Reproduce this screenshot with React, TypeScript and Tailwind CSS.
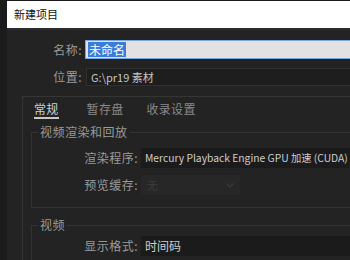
import React from 'react';

const font = { fontFamily: '"Noto Sans CJK SC", "Noto Sans", sans-serif' };

const Row: React.FC<{ label: string; children: React.ReactNode; className?: string }> = ({ label, children, className }) => (
  <div className={`flex items-center h-[20px] ${className ?? ''}`}>
    <div className="w-[108px] shrink-0 text-right pr-[2px] text-[12px] leading-[16px] tracking-[0.5px] text-[#9a9a9a]">{label}:</div>
    {children}
  </div>
);

const App: React.FC = () => {
  return (
    <div className="w-[350px] h-[260px] flex bg-[#1b1b1b] overflow-hidden select-none" style={font}>
      {/* window shadow on the left */}
      <div className="w-[7px] shrink-0 bg-[#1b1b1b]" />

      <div className="flex-1 flex flex-col min-w-0">
        {/* Title bar */}
        <div className="mt-[1px] h-[27px] shrink-0 bg-white flex items-center pl-[7px] text-[11px] text-[#111]">
          新建项目
        </div>
        <div className="h-[2px] shrink-0 bg-[#2c2c2c]" />

        <div className="flex-1 bg-[#232323] flex flex-col min-w-0">
          {/* Name */}
          <div className="mt-[10px] flex items-center h-[19px]">
            <div className="w-[75px] shrink-0 text-right text-[12px] tracking-[0.5px] text-[#9a9a9a]">名称:</div>
            <div className="ml-[3px] flex-1 h-[19px] -mr-[10px] bg-[#e2e2e2] border border-[#7aa6e0] flex items-center pl-[2px]">
              <span className="bg-[#3b7bd9] text-white text-[12px] leading-[15px] px-[1px]">未命名</span>
            </div>
          </div>

          {/* Location */}
          <div className="mt-[9px] flex items-center h-[18px]">
            <div className="w-[75px] shrink-0 text-right text-[12px] tracking-[0.5px] text-[#9a9a9a]">位置:</div>
            <div className="ml-[4px] flex-1 -mr-[10px] h-[18px] bg-[#1e1e1e] border border-[#303030] flex items-center pl-[4px] text-[11px] text-[#c4c4c4]">
              G:\pr19 素材
            </div>
          </div>

          {/* Tab panel */}
          <div className="mt-[10px] ml-[15px] -mr-[10px] flex-1 border border-[#353535] flex flex-col pt-[4px]">
            <div className="flex pl-[11px] text-[12px] leading-[16px] tracking-[0.3px]">
              <div className="text-[#cfcfcf] border-b-2 border-[#c8c8c8]">常规</div>
              <div className="ml-[28px] text-[#8a8a8a]">暂存盘</div>
              <div className="ml-[23px] text-[#8a8a8a]">收录设置</div>
            </div>

            <fieldset className="mt-[5px] ml-[8px] border border-[#333333] pb-[12px]">
              <legend className="ml-[6px] px-[2px] text-[12px] leading-[16px] tracking-[0.5px] text-[#9a9a9a]">视频渲染和回放</legend>
              <Row label="渲染程序" className="mt-[8px]">
                <div className="flex-1 h-[20px] ml-[1px] bg-[#1b1b1b] flex items-center pl-[4px] text-[10.3px] text-[#cdcdcd] whitespace-nowrap overflow-hidden">
                  Mercury Playback Engine GPU 加速 (CUDA)
                </div>
              </Row>
              <Row label="预览缓存" className="mt-[7px]">
                <div className="w-[99px] h-[20px] ml-[1px] bg-[#272727] flex items-center justify-between pl-[6px] pr-[6px] text-[11px] text-[#3e3e3e]">
                  <span>无</span>
                  <svg width="8" height="5" viewBox="0 0 8 5">
                    <path d="M0.5 0.5 L4 4 L7.5 0.5" stroke="#3c3c3c" strokeWidth="1.2" fill="none" />
                  </svg>
                </div>
              </Row>
            </fieldset>

            <fieldset className="mt-[9px] ml-[8px] border border-[#333333] pb-[12px]">
              <legend className="ml-[6px] px-[2px] text-[12px] leading-[16px] tracking-[0.5px] text-[#9a9a9a]">视频</legend>
              <Row label="显示格式" className="mt-[3px]">
                <div className="flex-1 h-[20px] ml-[1px] bg-[#1b1b1b] flex items-center pl-[4px] text-[12px] text-[#cdcdcd]">
                  时间码
                </div>
              </Row>
            </fieldset>
          </div>
        </div>
      </div>
    </div>
  );
};

export default App;
